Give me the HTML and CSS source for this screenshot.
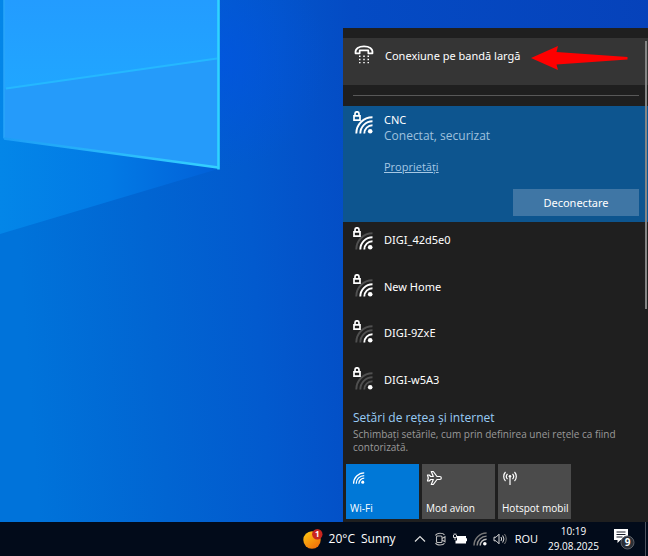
FILE: index.html
```html
<!DOCTYPE html>
<html lang="ro">
<head>
<meta charset="utf-8">
<meta name="viewport" content="width=device-width, initial-scale=1">
<title>Desktop</title>
<link rel="stylesheet" href="styles.css">
</head>
<body>
<svg class="defs" aria-hidden="true">
  <symbol id="lock" viewBox="0 0 8 10">
    <path d="M2 4.5V2.8a2 2 0 0 1 4 0v1.7M1 4.900h6v4.200H1z" fill="none" stroke="#fff" stroke-width="1.700"/>
  </symbol>
  <symbol id="waves" viewBox="0 0 18 18">
    <g fill="none" stroke-width="1.900">
      <path class="w4" d="M1.300 17.500A16.200 16.200 0 0 1 17.500 1.300"/>
      <path class="w3" d="M5.300 17.500A12.200 12.200 0 0 1 17.500 5.300"/>
      <path class="w2" d="M9.300 17.500A8.200 8.200 0 0 1 17.500 9.300"/>
    </g>
    <circle class="dot" cx="15.200" cy="15.200" r="2.300" fill="#fff"/>
  </symbol>
</svg>
<div class="screen">
  <main class="desktop">
    <svg class="wallpaper" viewBox="0 0 648 522" preserveAspectRatio="xMinYMin slice" aria-hidden="true">
      <defs>
        <linearGradient id="base" x1="0" y1="0" x2="1" y2="-0.06">
          <stop offset="0" stop-color="#0073da"/>
          <stop offset="0.2" stop-color="#0165d2"/>
          <stop offset="0.36" stop-color="#025ace"/>
          <stop offset="0.54" stop-color="#044bc4"/>
          <stop offset="1" stop-color="#0642ba"/>
        </linearGradient>
        <linearGradient id="beam" gradientUnits="userSpaceOnUse" x1="0" y1="0" x2="218" y2="0">
          <stop offset="0" stop-color="#0386e8"/>
          <stop offset="0.5" stop-color="#027ae5"/>
          <stop offset="1" stop-color="#0260d8"/>
        </linearGradient>
        <linearGradient id="pane" x1="0" y1="0" x2="0" y2="1">
          <stop offset="0" stop-color="#239cff"/>
          <stop offset="1" stop-color="#20a6ff"/>
        </linearGradient>
        <radialGradient id="glow" gradientUnits="userSpaceOnUse" cx="218" cy="60" r="110">
          <stop offset="0" stop-color="#0254e2" stop-opacity="0.7"/>
          <stop offset="1" stop-color="#0254e2" stop-opacity="0"/>
        </radialGradient>
        <linearGradient id="edge" gradientUnits="userSpaceOnUse" x1="0" y1="0" x2="218" y2="0">
          <stop offset="0" stop-color="#1c9cf6"/>
          <stop offset="1" stop-color="#35d2ff"/>
        </linearGradient>
      </defs>
      <path d="M0 0H648V522H0z" fill="url(#base)"/>
      <path d="M218 0h112v170H218z" fill="url(#glow)"/>
      <path d="M0 0H218V169L0 234z" fill="url(#beam)"/>
      <path d="M4 0H218V167L4 138z" fill="#259bfa"/>
      <path d="M4 0H218V58L4 89z" fill="url(#pane)"/>
      <path d="M6 88.5L217 58.5" stroke="#25b8ff" stroke-width="2"/>
      <path d="M4 0V138.500" stroke="#2aa6fa" stroke-width="1.500"/>
      <path d="M4 138.500L218 167.500" stroke="url(#edge)" stroke-width="2.500"/>
      <path d="M218.500 0V169.500" stroke="#2fd3ff" stroke-width="2.600"/>
    </svg>

    <section class="flyout" aria-label="Rețele">
      <div class="broadband">
        <svg class="phone" viewBox="0 0 20 20" aria-hidden="true">
          <path d="M1.500 8.300C.9 3.500 5 1.400 10 1.400s9.100 2.100 8.500 6.900h-4.200V5.400H5.700v2.900z" fill="none" stroke="#fff" stroke-width="1.700" stroke-linejoin="round"/>
          <path d="M5 10.500h1.500V12H5zM9.250 10.500h1.500V12h-1.500zM13.500 10.500H15V12h-1.500zM5 13.700h1.500v1.500H5zM9.250 13.700h1.500v1.500h-1.500zM13.500 13.700H15v1.500h-1.500zM5 17h1.500v1.300H5zM9.250 17h1.500v1.300h-1.500zM13.500 17H15v1.300h-1.500z" fill="#fff"/>
        </svg>
        <span class="name">Conexiune pe bandă largă</span>
        <svg class="arrow" viewBox="0 0 97 26" aria-hidden="true">
          <path d="M0 13L27 1L25.500 7L96.500 12V14.500L25.500 19.500L27 25z" fill="#fe0000"/>
        </svg>
      </div>
      <hr class="rule">
      <div class="network connected">
        <span class="signal s4"><svg class="waves"><use href="#waves"/></svg><svg class="lock"><use href="#lock"/></svg></span>
        <div class="info">
          <div class="name">CNC</div>
          <div class="status">Conectat, securizat</div>
          <a class="props" href="#">Proprietăți</a>
          <button class="disconnect" type="button">Deconectare</button>
        </div>
      </div>
      <div class="list">
        <div class="network"><span class="signal s3"><svg class="waves"><use href="#waves"/></svg><svg class="lock"><use href="#lock"/></svg></span><span class="name">DIGI_42d5e0</span></div>
        <div class="network"><span class="signal s3"><svg class="waves"><use href="#waves"/></svg><svg class="lock"><use href="#lock"/></svg></span><span class="name">New Home</span></div>
        <div class="network"><span class="signal s2"><svg class="waves"><use href="#waves"/></svg><svg class="lock"><use href="#lock"/></svg></span><span class="name">DIGI-9ZxE</span></div>
        <div class="network"><span class="signal s1"><svg class="waves"><use href="#waves"/></svg><svg class="lock"><use href="#lock"/></svg></span><span class="name">DIGI-w5A3</span></div>
      </div>
      <div class="settings">
        <a class="settings-link" href="#">Setări de rețea și internet</a>
        <p class="hint">Schimbați setările, cum prin definirea unei rețele ca fiind contorizată.</p>
      </div>
      <div class="tiles">
        <button class="tile on" type="button">
          <svg class="tile-icon s4" viewBox="-2 -3 20 24"><use href="#waves" width="18" height="18"/></svg>
          <span>Wi-Fi</span>
        </button>
        <button class="tile" type="button">
          <svg class="tile-icon" viewBox="0 0 16 16"><path d="M1.500 5h1.700l1.500 1.500h2.600L5.300 1.500h2L11 6.500h2.800a1.500 1.500 0 0 1 0 3H11l-3.700 5h-2l2-5H4.700L3.200 11H1.500l.800-3z" fill="none" stroke="#fff" stroke-width="1.200" stroke-linejoin="round"/></svg>
          <span>Mod avion</span>
        </button>
        <button class="tile" type="button">
          <svg class="tile-icon" viewBox="0 0 16 16"><path d="M3.500 2a6.500 6.500 0 0 0 0 9M5.500 3.800a4 4 0 0 0 0 5.400M12.500 2a6.500 6.500 0 0 1 0 9M10.500 3.800a4 4 0 0 1 0 5.400M8 6.500V15" fill="none" stroke="#fff" stroke-width="1.200"/><circle cx="8" cy="6.300" r="1.300" fill="#fff"/></svg>
          <span>Hotspot mobil</span>
        </button>
      </div>
      <div class="scrollbar"></div>
    </section>
  </main>

  <footer class="taskbar">
    <button class="weather" type="button">
      <svg class="sun" viewBox="0 0 20 20" aria-hidden="true">
        <defs><linearGradient id="sun" x1="0" y1="0" x2="0.700" y2="1"><stop offset="0" stop-color="#ffcb12"/><stop offset="1" stop-color="#f0700a"/></linearGradient></defs>
        <circle cx="9" cy="11" r="8.700" fill="url(#sun)"/>
        <circle cx="14.300" cy="5.200" r="5.200" fill="#c9261f"/>
        <text class="sun-count" x="14.300" y="8" text-anchor="middle">1</text>
      </svg>
      <span>20°C</span><span>Sunny</span>
    </button>
    <div class="tray">
      <svg viewBox="0 0 14 14"><path d="M2 9.500L7 4.500l5 5" fill="none" stroke="#ddd" stroke-width="1.200"/></svg>
      <svg viewBox="0 0 14 14"><g fill="none" stroke="#bbb" stroke-width="1.100"><rect x="3.500" y="4" width="5.500" height="6.500" rx="1"/><path d="M9 6.500l3-1.800v5L9 8M2.500 3.500Q3.500 1.300 7 1.300t4.500 1.700M2.500 11Q3.500 13 7 13t4.500-1.700"/></g></svg>
      <svg viewBox="0 0 14 14"><path d="M4 4h9v7.500H2.500V8.500H4zM13 6.200h1v3h-1z" fill="#fff"/><path d="M.5 3v2.500h3V3M1.200 3V1.500M2.800 3V1.500M2 5.500V8" fill="none" stroke="#ddd"/></svg>
      <svg class="s1" viewBox="0 0 18 18"><use href="#waves" width="18" height="18"/></svg>
      <svg viewBox="0 0 14 14"><path d="M1 5.200h2l3-3v9.600l-3-3H1zM8 5q1.300 2 0 4M9.700 3.500q2.500 3.500 0 7" fill="none" stroke="#ddd" stroke-width="1"/><path d="M11.500 2q3.500 5 0 10" fill="none" stroke="#777"/></svg>
    </div>
    <span class="lang">ROU</span>
    <time class="clock" datetime="2025-08-29T10:19"><span>10:19</span><span>29.08.2025</span></time>
    <button class="notify" type="button" aria-label="Notificări">
      <svg viewBox="0 0 22 22" aria-hidden="true">
        <path d="M1 1h14v11H7.500L4.500 15v-3H1z" fill="#fff"/>
        <path d="M3.500 4h9M3.500 6.500h9M3.500 9h6" stroke="#1a1f2a"/>
        <circle cx="14.500" cy="14.500" r="6.500" fill="#2b2f36" stroke="#5c6068"/>
        <text class="notify-count" x="14.500" y="18" text-anchor="middle">9</text>
      </svg>
    </button>
    <div class="show-desktop"></div>
  </footer>
</div>
</body>
</html>
```

FILE: styles.css
```css
* { box-sizing: border-box; }

body {
  margin: 0;
  font-family: "Open Sans", "Noto Sans", sans-serif;
  font-size: 12px;
  line-height: 16px;
  color: #fff;
}

button {
  border: 0;
  padding: 0;
  background: none;
  color: inherit;
  font: inherit;
}

svg { display: block; }
.defs { position: absolute; width: 0; height: 0; }

.screen {
  min-height: 100vh;
  display: flex;
  flex-direction: column;
}

.desktop {
  position: relative;
  flex: 1;
  display: flex;
  justify-content: flex-end;
  padding-top: 28px;
  background: #044bc4;
}

.wallpaper {
  position: absolute;
  inset: 0;
  width: 100%;
  height: 100%;
}

.flyout {
  position: relative;
  width: 305px;
  display: flex;
  flex-direction: column;
  padding: 10px 0 3px;
  background: #1f1f1f;
}

.broadband {
  display: flex;
  align-items: flex-start;
  height: 47px;
  padding: 7px 11px;
  background: #353535;
}

.name,
.disconnect {
  font-family: "Noto Sans", "Open Sans", sans-serif;
  font-size: 11px;
  white-space: nowrap;
}

.broadband .name { margin: 3px 11px 0; }
.phone { flex: none; width: 20px; height: 20px; }
.arrow { flex: none; width: 97px; height: 26px; }

.rule {
  width: auto;
  height: 1px;
  margin: 10px 9px 10px 10px;
  border: 0;
  background: #585858;
}

.network {
  display: flex;
  gap: 9px;
  padding: 5px 9px 0 10px;
}

.list .name { padding-top: 5px; }

.connected {
  background: #0d558f;
  padding-bottom: 6px;
}

.signal {
  position: relative;
  width: 22px;
  height: 24px;
  flex: none;
}

.waves {
  position: absolute;
  right: 2px;
  bottom: 1px;
  width: 18px;
  height: 18px;
}

.lock {
  position: absolute;
  left: 0;
  top: 0;
  width: 8px;
  height: 10px;
}

.s1, .s2, .s3, .s4 { --w2: #505050; --w3: #505050; --w4: #505050; }
.s2 { --w2: #fff; }
.s3 { --w2: #fff; --w3: #fff; }
.s4 { --w2: #fff; --w3: #fff; --w4: #fff; }
.w2 { stroke: var(--w2); }
.w3 { stroke: var(--w3); }
.w4 { stroke: var(--w4); }

.info {
  flex: 1;
  display: flex;
  flex-direction: column;
  align-items: flex-start;
  padding-top: 1px;
}

.status { color: #9fc1de; }

.props {
  margin-top: 15px;
  color: #a6c8e4;
  font-size: 11px;
}

.disconnect {
  align-self: flex-end;
  width: 126px;
  height: 27px;
  margin-top: 14px;
  background: #3f76a5;
}

.list {
  flex: 1;
  display: grid;
  grid-auto-rows: 1fr;
}

.settings { padding: 2px 9px 0 10px; }

.settings-link {
  color: #99cdf5;
  text-decoration: none;
}

.hint {
  margin: 2px 0 10px;
  color: #9a9a9a;
  font-size: 10px;
  line-height: 13px;
}

.tiles {
  display: flex;
  gap: 3px;
  padding-left: 3px;
}

.tile {
  display: flex;
  flex-direction: column;
  justify-content: space-between;
  align-items: flex-start;
  width: 73px;
  height: 55px;
  padding: 6px 4px 4px;
  background: #4b4b4b;
  font-size: 10px;
  line-height: 13px;
  white-space: nowrap;
}

.tile.on { background: #0078d7; }
.tile-icon { width: 16px; height: 16px; }

.scrollbar {
  position: absolute;
  top: 13px;
  right: 1px;
  width: 2px;
  height: 268px;
  background: #858585;
}

.taskbar {
  display: flex;
  align-items: center;
  justify-content: flex-end;
  height: 34px;
  background: #020b1a;
  font-size: 11px;
}

.weather {
  display: flex;
  align-items: center;
  gap: 6px;
  margin-right: 17px;
  font-size: 12px;
}

.sun { width: 20px; height: 20px; }
.sun-count { fill: #fff; font-size: 8px; font-weight: 700; }

.tray { display: flex; gap: 6px; }
.tray svg { width: 14px; height: 14px; }
.tray .s1 { --w2: #bbb; --w3: #888; --w4: #777; }
.lang { margin-left: 8px; }

.clock {
  display: flex;
  flex-direction: column;
  align-items: center;
  margin-left: 10px;
  font-size: 10px;
  line-height: 15px;
}

.notify { margin: 0 10px 0 14px; }
.notify svg { width: 22px; height: 22px; }
.notify-count { fill: #fff; font-size: 10px; font-weight: 700; }

.show-desktop {
  width: 3px;
  height: 34px;
  border-left: 1px solid #4c525e;
}
```
